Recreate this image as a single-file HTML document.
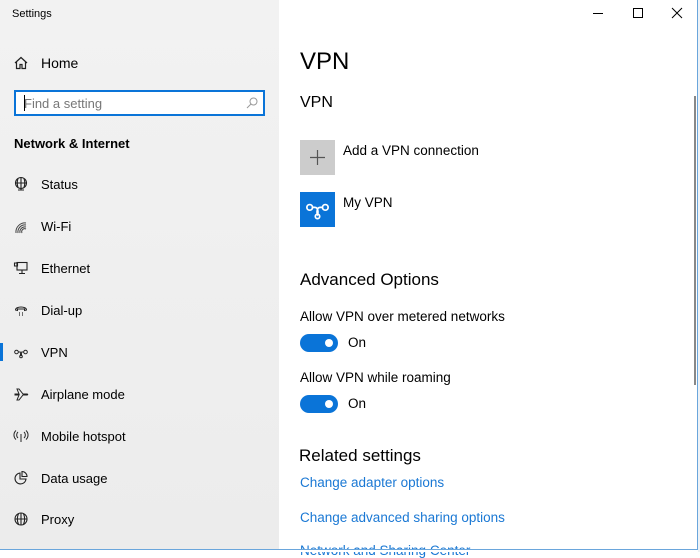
<!DOCTYPE html>
<html><head><meta charset="utf-8"><style>
*{margin:0;padding:0;box-sizing:border-box}
body{width:700px;height:552px;overflow:hidden;font-family:"Liberation Sans",sans-serif;background:#fff;position:relative;color:#000}
.side{position:absolute;left:0;top:0;width:279px;height:549px;background:linear-gradient(180deg,#f2f2f2,#ececec)}
.t{position:absolute;font-size:13px;white-space:nowrap}
.m{font-size:13.5px}
.ic{position:absolute;left:13px;width:16px;height:16px}
.main{position:absolute;left:279px;top:0;width:418px;height:549px;background:#fff}
.link{color:#1a78d4}
.tog{position:absolute;left:300px;width:38px;height:18px;border-radius:9px;background:#0a74d8}
.tog:after{content:"";position:absolute;right:5px;top:5px;width:8px;height:8px;border-radius:50%;background:#fff}
</style></head><body>
<div class="side"></div>
<div class="t" style="left:12px;top:8px;font-size:11px">Settings</div>
<svg class="ic" style="top:55px" viewBox="0 0 16 16" fill="none" stroke="#222" stroke-width="1.2"><path d="M2 8L8 2.5 14 8M3.5 7v6.5h3.5v-4h2v4h3.5V7"/></svg>
<div class="t" style="left:41px;top:55px;font-size:14px">Home</div>
<div style="position:absolute;left:14px;top:90px;width:251px;height:26px;border:2px solid #0a74d8;background:#fff"></div>
<div class="t" style="left:24px;top:96px;color:#777">Find a setting</div>
<div style="position:absolute;left:24px;top:95px;width:1px;height:16px;background:#000"></div>
<svg style="position:absolute;left:245px;top:96px" width="14" height="14" viewBox="0 0 14 14" fill="none" stroke="#999" stroke-width="1"><circle cx="8.5" cy="5.5" r="3.5"/><path d="M6 8l-4 4"/></svg>
<div class="t" style="left:14px;top:136px;font-weight:bold">Network &amp; Internet</div>

<svg class="ic" style="top:176px" viewBox="0 0 16 16" fill="none" stroke="#222" stroke-width="1.1"><circle cx="8" cy="7" r="5.5"/><path d="M2.5 7h11M8 1.5v11M5 2.5c-1 3-1 6 0 9M11 2.5c1 3 1 6 0 9M5 14h6M8 12.5v1.5"/></svg>
<div class="t" style="left:41px;top:177px">Status</div>
<svg class="ic" style="top:219px" viewBox="0 0 16 16" fill="none" stroke="#444" stroke-width="1"><path d="M3 14a9 9 0 0 1 10-10M5 14a7 7 0 0 1 8-8M7 14a5 5 0 0 1 6-6M9 14a3 3 0 0 1 4-4"/></svg>
<div class="t" style="left:41px;top:219px">Wi-Fi</div>
<svg class="ic" style="top:260px" viewBox="0 0 16 16" fill="none" stroke="#222" stroke-width="1.1"><rect x="4" y="2.5" width="10" height="7.5"/><path d="M9 10v3M6 13.5h6M1.5 3h3v3h-3z"/></svg>
<div class="t" style="left:41px;top:261px">Ethernet</div>
<svg class="ic" style="top:303px" viewBox="0 0 16 16" fill="none" stroke="#222" stroke-width="1"><path d="M2.5 7c0-4 11-4 11 0l-2 .5V6H4.5v1.5z"/><path d="M6 10h1M9 10h1M6 12h1M9 12h1" stroke-width="1.2"/></svg>
<div class="t" style="left:41px;top:303px">Dial-up</div>
<div style="position:absolute;left:0;top:343px;width:3px;height:18px;background:#0a74d8"></div>
<svg class="ic" style="top:345px" viewBox="0 0 16 16" fill="none" stroke="#222" stroke-width="1"><circle cx="3.5" cy="7" r="1.8"/><circle cx="12.5" cy="7" r="1.8"/><path d="M5.3 7h1.5c2 0 2 3 1.2 3.5-.8-.5-.8-3.5 1.2-3.5h1.5"/><circle cx="8" cy="11.5" r="1.3"/></svg>
<div class="t" style="left:41px;top:345px">VPN</div>
<svg class="ic" style="top:386px" viewBox="0 0 16 16" fill="none" stroke="#222" stroke-width="1"><path d="M2 8h4l-2-5h2l4 5h4c1 0 1 1 0 1h-4l-4 5H4l2-5H2z"/></svg>
<div class="t" style="left:41px;top:387px">Airplane mode</div>
<svg class="ic" style="top:428px" viewBox="0 0 16 16" fill="none" stroke="#222" stroke-width="1"><path d="M8 6v8M5 4a4 4 0 0 0 0 6M11 4a4 4 0 0 1 0 6M3 2.5a6 6 0 0 0 0 9M13 2.5a6 6 0 0 1 0 9"/></svg>
<div class="t" style="left:41px;top:429px">Mobile hotspot</div>
<svg class="ic" style="top:470px" viewBox="0 0 16 16" fill="none" stroke="#222" stroke-width="1.1"><path d="M7 3a5.5 5.5 0 1 0 6 6H7z"/><path d="M9 1.5a5 5 0 0 1 5 5H9z"/></svg>
<div class="t" style="left:41px;top:471px">Data usage</div>
<svg class="ic" style="top:511px" viewBox="0 0 16 16" fill="none" stroke="#222" stroke-width="1.1"><circle cx="8" cy="8" r="6"/><path d="M2 8h12M8 2v12M5.5 2.6c-1.5 3.5-1.5 7.3 0 10.8M10.5 2.6c1.5 3.5 1.5 7.3 0 10.8"/></svg>
<div class="t" style="left:41px;top:512px">Proxy</div>

<div class="main"></div>
<svg style="position:absolute;left:592px;top:8px" width="12" height="10"><path d="M1 5.5h10" stroke="#000"/></svg>
<svg style="position:absolute;left:632px;top:7px" width="12" height="12"><rect x="1.5" y="1.5" width="9" height="9" fill="none" stroke="#000"/></svg>
<svg style="position:absolute;left:671px;top:7px" width="12" height="12"><path d="M1 1l10 10M11 1L1 11" stroke="#000"/></svg>

<div class="t" style="left:300px;top:48px;font-size:24px">VPN</div>
<div class="t" style="left:300px;top:94px;font-size:16px">VPN</div>
<div style="position:absolute;left:300px;top:140px;width:35px;height:35px;background:#ccc"></div>
<svg style="position:absolute;left:309px;top:149px" width="17" height="17"><path d="M8.5 1v15M1 8.5h15" stroke="#555" stroke-width="1.2"/></svg>
<div class="t m" style="left:343px;top:143px">Add a VPN connection</div>
<div style="position:absolute;left:300px;top:192px;width:35px;height:35px;background:#0a74d8"></div>
<svg style="position:absolute;left:305px;top:198px" width="25" height="25" viewBox="0 0 16 16" fill="none" stroke="#fff" stroke-width="1.1"><circle cx="3" cy="6" r="1.8"/><circle cx="13" cy="6" r="1.8"/><path d="M4.8 6h1.5c2.2 0 2.2 3.5 1.7 4.5-.5-1-.5-4.5 1.7-4.5h1.5"/><circle cx="8" cy="11.8" r="1.4"/></svg>
<div class="t m" style="left:343px;top:195px">My VPN</div>
<div class="t" style="left:300px;top:270px;font-size:17px">Advanced Options</div>
<div class="t m" style="left:300px;top:309px">Allow VPN over metered networks</div>
<div class="tog" style="top:334px"></div>
<div class="t m" style="left:348px;top:335px">On</div>
<div class="t m" style="left:300px;top:370px">Allow VPN while roaming</div>
<div class="tog" style="top:395px"></div>
<div class="t m" style="left:348px;top:396px">On</div>
<div class="t" style="left:299px;top:446px;font-size:17px">Related settings</div>
<div class="t link m" style="left:300px;top:475px">Change adapter options</div>
<div class="t link m" style="left:300px;top:510px">Change advanced sharing options</div>
<div class="t link m" style="left:300px;top:543px">Network and Sharing Center</div>

<div style="position:absolute;left:694px;top:96px;width:2px;height:289px;background:#888"></div>
<div style="position:absolute;left:697px;top:0;width:1px;height:552px;background:#6aa6dc"></div>
<div style="position:absolute;left:698px;top:0;width:2px;height:552px;background:#eef2f6"></div>
<div style="position:absolute;left:0;top:549px;width:698px;height:1px;background:#6aa6dc"></div>
<div style="position:absolute;left:0;top:550px;width:698px;height:2px;background:#fff"></div>
</body></html>
